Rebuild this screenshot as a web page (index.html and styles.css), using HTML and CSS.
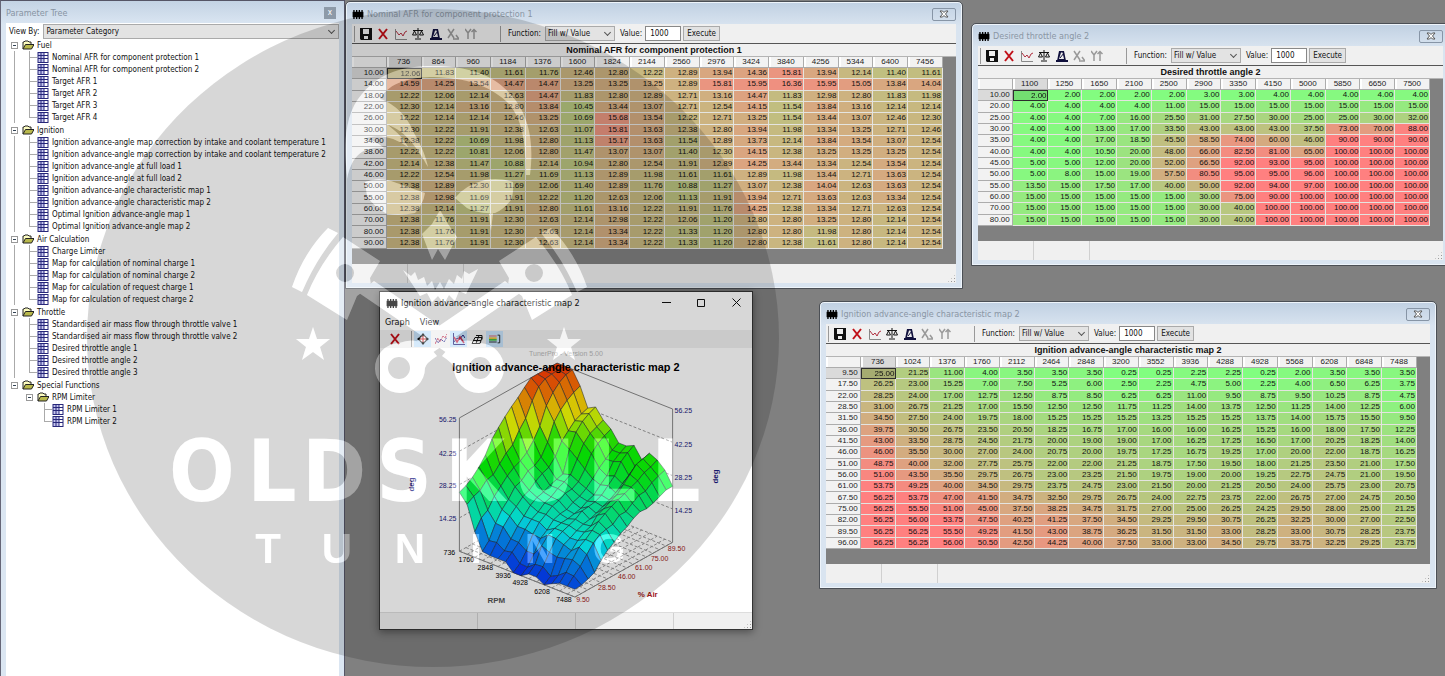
FILE: index.html
```
<!DOCTYPE html>
<html lang="en">
<head>
<meta charset="utf-8">
<title>Parameter Tree</title>
<link rel="stylesheet" href="styles.css">
</head>
<body>
<svg class="defs" aria-hidden="true">
  <symbol id="i-chip" viewBox="0 0 12 10"><path d="M0 2h12v6H0z"/><path d="M1.5 0v10M4.5 0v10M7.5 0v10M10.500 0v10" stroke="#000" stroke-width="1.500"/></symbol>
  <symbol id="i-map" viewBox="0 0 11 11"><path d="M0 0h11v11H0z" fill="#26267a"/><path d="M1 1h2v2H1zM4 1h2v2H4zM1 4h2v2H1zM4 4h2v2H4zM1 7h2v3H1zM4 7h2v3H4z" fill="#c4c4ee"/><path d="M7 1h3v2H7zM7 4h3v2H7zM7 7h3v3H7z" fill="#fff"/></symbol>
  <symbol id="i-folder" viewBox="0 0 12 10"><path d="M1 9V2h1l1-1h3l1 1h2v2" fill="#fbfbc0" stroke="#222"/><path d="M1 9l2.500-4.500H12L9.500 9z" fill="#b9b94c" stroke="#222"/></symbol>
  <symbol id="i-save" viewBox="0 0 12 12"><path d="M0 0h12v12H1l-1-1z" fill="#111"/><path d="M3 1h6v5H3zM4 8h4v3H4z" fill="#eee"/></symbol>
  <symbol id="i-x" viewBox="0 0 12 12"><path d="M2 1l8 10M10 1L2 11" stroke="#c01018" stroke-width="2" fill="none"/></symbol>
  <symbol id="i-graph" viewBox="0 0 12 12"><path d="M.5 1v10.500H12" stroke="#888" fill="none"/><path d="M1 3l3 4 2-2 2 3 2-4 2-1" stroke="#b03040" fill="none"/></symbol>
  <symbol id="i-scale" viewBox="0 0 12 12"><path d="M6 0v10M3 11h6M1 2.500h10M2.500 3L.5 7h4zM9.500 3l-2 4h4z" stroke="#111" fill="none"/></symbol>
  <symbol id="i-metro" viewBox="0 0 12 12"><path d="M1 11L3 1h5l2 10z" fill="#10103c"/><path d="M0 10h12v2H0z" fill="#10103c"/><path d="M5 2.500h1.500L8 9H3z" fill="#eee"/><path d="M4 8l4-5" stroke="#10103c"/></symbol>
  <symbol id="i-xa" viewBox="0 0 12 12"><path d="M1 1l6 9M7 1L1 10M6 11h6l-3-4" stroke="#999" stroke-width="1.500" fill="none"/></symbol>
  <symbol id="i-yt" viewBox="0 0 12 12"><path d="M0 1l3 4 3-4M3 5v6M9 11V2M6.500 4L9 1.500 11.500 4" stroke="#999" stroke-width="1.500" fill="none"/></symbol>
  <symbol id="i-close" viewBox="0 0 10 8"><path d="M1 1h2.500L5 2.500 6.500 1H9L6.500 4 9 7H6.500L5 5.500 3.500 7H1l2.500-3z" fill="#fff" stroke="#555"/></symbol>
  <symbol id="i-target" viewBox="0 0 12 12"><circle cx="6" cy="6" r="3.500" fill="#fff" stroke="#111"/><path d="M6 0l2 2.500H4zM6 12l2-2.500H4zM0 6l2.500-2v4zM12 6L9.500 4v4z"/><path d="M3 6h6M6 3v6" stroke="#c01018"/></symbol>
  <symbol id="i-waves" viewBox="0 0 12 12"><path d="M0 11l3-6 2 4 3-6 2 2 2-4" stroke="#c03050" fill="none" stroke-dasharray="3 1"/><path d="M0 5l3 5 3-4 3 3 3-5" stroke="#303090" fill="none" stroke-dasharray="2 1"/></symbol>
  <symbol id="i-plot" viewBox="0 0 12 12"><path d="M.5 0v11.500H12M1 9l3-4 2 2 4-5 2 3" stroke="#26267a" fill="none"/><path d="M1 4l3 5 3-5 4 6" stroke="#c03050" stroke-width="1.500" fill="none"/></symbol>
  <symbol id="i-mesh" viewBox="0 0 12 12"><path d="M1 10.500l3-6h7l-2 6zM2.500 7.500h7.500M5 10.500l3-8h3v4M5 2.500h4" stroke="#111" fill="none"/></symbol>
  <symbol id="i-legend" viewBox="0 0 14 12"><path d="M0 2.500h9" stroke="#e05050"/><path d="M0 4h9v2H0z" fill="#e8c040"/><path d="M0 6h9v2H0z" fill="#4b4"/><path d="M0 9.500h9M10 1.500h2.500v9H10" stroke="#111" fill="none"/></symbol>
</svg>

<div class="desktop">
  <aside class="pane">
    <header class="pane-head"><h1>Parameter Tree</h1><button type="button" aria-label="Close tree">x</button></header>
    <div class="pane-body">
      <div class="viewby">
        <label for="viewby">View By:</label>
        <span class="drop"><select id="viewby"><option>Parameter Category</option></select></span>
      </div>
      <ul class="tree" id="tree"></ul>
    </div>
  </aside>

  <main class="workspace">
    <section class="win win-afr" data-map="afr"></section>
    <section class="win win-throttle" data-map="throttle"></section>
    <section class="win win-ignition" data-map="ignition"></section>

    <section class="graph">
      <header class="graph-head">
        <svg class="chip"><use href="#i-chip"/></svg>
        <h2>Ignition advance-angle characteristic map 2</h2>
        <button type="button" aria-label="Minimize"><svg viewBox="0 0 9 9"><path d="M0 4.500h9"/></svg></button>
        <button type="button" aria-label="Maximize"><svg viewBox="0 0 9 9"><path d="M.5 1.500h7v7h-7z"/></svg></button>
        <button type="button" aria-label="Close"><svg viewBox="0 0 9 9"><path d="M.5.5l8 8M8.500.5l-8 8"/></svg></button>
      </header>
      <nav class="menu"><button type="button">Graph</button><button type="button">View</button></nav>
      <div class="graph-tools">
        <button type="button" aria-label="Delete"><svg><use href="#i-x"/></svg></button>
        <span class="sep"></span>
        <button type="button" class="on" aria-label="Move"><svg><use href="#i-target"/></svg></button>
        <button type="button" aria-label="Points"><svg><use href="#i-waves"/></svg></button>
        <button type="button" class="on" aria-label="Plot"><svg><use href="#i-plot"/></svg></button>
        <button type="button" aria-label="Mesh"><svg><use href="#i-mesh"/></svg></button>
        <button type="button" class="on" aria-label="Legend"><svg><use href="#i-legend"/></svg></button>
      </div>
      <svg class="chart" id="chart" viewBox="380 348 372 265"></svg>
      <footer class="status quarters"><span></span><span></span><span></span><span></span></footer>
    </section>
  </main>

  <svg class="mark" viewBox="87 9 692 658" aria-hidden="true">
    <mask id="cut" maskUnits="userSpaceOnUse" x="87" y="9" width="692" height="658">
      <path d="M87 9h692v658H87z" fill="#fff"/>
      <use href="#emblem" fill="#000"/>
    </mask>
    <ellipse cx="433" cy="338" rx="346" ry="329" fill="#000" fill-opacity=".155" mask="url(#cut)"/>
    <g fill="#fff" opacity=".28">
      <g id="emblem">
        <path d="M347 175C343 140 346 112 362 94 380 72 405 66 432 66c35 0 62 8 80 30 18 20 22 50 18 79h-4c0-30-3-58-20-74-18-16-40-23-72-24-22 0-45 5-54 22 14 4 28 18 34 34 8 14 12 24 14 34-10-18-22-36-40-42 10 8 16 14 20 22-14-10-30-14-44-8 8 0 14 4 20 9-20-2-32 6-37 31z"/>
        <path d="M365 182q12-5 26-1l34 12q-2 12-10 20-14 3-28 1-14-8-20-18zM455 198q10-13 30-18 14-3 28 2 1 10-2 18-8 10-16 13-18 1-28-5zM440 210l8 14 9 13-12 23-7-11-6 11-10-26 10-10zM489 214l4-1-2 18z"/>
        <path d="M403 270l8 6 4-4 3 8 6-3 3 9 5-5 3 9 5-8 4 7 5-10 5 5 3-9 5 4 2-8 5 3 9-5-12 25-7-3-4 10-6-6-5 9-6-8-6 6-5-9-7 3z"/>
        <g id="piston">
          <path fill-rule="evenodd" d="M328 228l10 5q-22 26-36 59l-10-5q12-35 36-59zM343 237l37 24-10 17 1 8-14 10-10 24-40-25q12-30 36-58zM354 273a9 9 0 1 0-18 0 9 9 0 1 0 18 0z"/>
          <path d="M374 281l88 60-12 14-91-62z"/>
          <path fill-rule="evenodd" d="M452 344a35 35 0 0 1 28-1 25 25 0 1 1-26 25q-1-5-12-12zM491 368a11 11 0 1 0-22 0 11 11 0 1 0 22 0z"/>
        </g>
        <use href="#piston" transform="matrix(-1 0 0 1 879 0)"/>
        <path id="star" d="M313 327l4 12h13l-10 8 4 13-11-8-11 8 4-13-10-8h13z"/>
        <use href="#star" x="251"/>
        <g class="mark-name">
          <text x="202" y="501">O</text><text x="272" y="501">L</text><text x="334" y="501">D</text><text x="404" y="501">S</text><text x="475" y="501">K</text><text x="544" y="501">U</text><text x="612" y="501">L</text><text x="676" y="501">L</text>
        </g>
        <g class="mark-sub">
          <text x="268" y="563">T</text><text x="337" y="563">U</text><text x="410" y="563">N</text><text x="476" y="563">I</text><text x="540" y="563">N</text><text x="609" y="563">G</text>
        </g>
      </g>
    </g>
  </svg>
</div>
<script src="app.js"></script>
</body>
</html>
```

FILE: styles.css
```
* { box-sizing: border-box; }
html, body { height: 100%; margin: 0; }
body { font-family: "DejaVu Sans Condensed", "DejaVu Sans", sans-serif; font-size: 8px; color: #111; background: #808080; }
button, input, select { font: inherit; color: inherit; }
button { margin: 0; padding: 0; border: 0; background: none; }
h1, h2, h3 { margin: 0; font-weight: normal; }
ul { list-style: none; margin: 0; padding: 0; }
.defs { position: absolute; width: 0; height: 0; }

.desktop { position: relative; display: flex; height: 100vh; overflow: hidden; }
.mark { position: absolute; left: 87px; top: 9px; width: 692px; height: 658px; pointer-events: none; }
.mark-name { font: bold 86px "DejaVu Sans Condensed", "DejaVu Sans", sans-serif; text-anchor: middle; }
.mark-sub { font: bold 42px "Liberation Sans", sans-serif; text-anchor: middle; }

/* parameter tree */
.pane { width: 345px; flex: none; display: flex; flex-direction: column; padding: 2px 5px 0 5px; background: linear-gradient(#c3d3e4, #dbe6f2 24px); border-left: 1px solid #667; border-right: 1px solid #556; border-top: 1px solid #556; }
.pane-head { height: 20px; display: flex; align-items: center; justify-content: space-between; padding-right: 3px; }
.pane-head h1 { font-size: 9px; color: #8794a3; }
.pane-head button { width: 12px; height: 12px; background: #8d9aa8; color: #fff; line-height: 10px; }
.pane-body { flex: 1; background: #fff; }
.viewby { display: flex; align-items: center; height: 16px; padding-left: 3px; gap: 4px; }
.viewby .drop { flex: 1; }
.drop { position: relative; display: flex; }
.drop::after { content: ""; position: absolute; right: 5px; top: 4px; width: 4px; height: 4px; border: solid #555; border-width: 0 1px 1px 0; transform: rotate(45deg); }
select { appearance: none; width: 100%; height: 15px; margin: 0; padding: 0 2px; background: #e3e3e3; border: 1px solid #aaa; border-radius: 0; }
.tree { padding-left: 1px; }
.tree li { display: flex; align-items: center; height: 12px; white-space: nowrap; }
.tree li.root:not(:first-child) { margin-top: 1px; }
.tree .g { width: 15px; height: 12px; flex: none; }
.g.line { background: linear-gradient(#aaa, #aaa) 7px 0 / 1px 100% no-repeat; }
.g.tee { background: linear-gradient(#aaa, #aaa) 7px 0 / 1px 100% no-repeat, linear-gradient(#aaa, #aaa) 7px 6px / 8px 1px no-repeat; }
.g.end { background: linear-gradient(#aaa, #aaa) 7px 0 / 1px 6px no-repeat, linear-gradient(#aaa, #aaa) 7px 6px / 8px 1px no-repeat; }
.g.box { display: flex; align-items: center; justify-content: center; }
.g.box button { width: 7px; height: 7px; border: 1px solid #999; background: linear-gradient(#345, #345) 1px 2px / 3px 1px no-repeat #fff; }
.tree svg { width: 12px; height: 11px; flex: none; margin-right: 3px; }
.tree .folder { height: 10px; }

/* map windows */
.workspace { position: relative; flex: 1; overflow: hidden; background: #808080; }
.win { position: absolute; display: flex; flex-direction: column; padding: 0 6px 5px; background: linear-gradient(#c0d0e2, #d9e4f0 24px); border: 1px solid #4b4f55; border-radius: 5px 5px 0 0; box-shadow: inset 0 0 0 1px #eef4fa; }
.win-afr { left: 0; top: 1px; width: 618px; }
.win-throttle { left: 626px; top: 23px; width: 479px; }
.win-ignition { left: 474px; top: 301px; width: 618px; }
.win-head { height: 22px; padding-top: 2px; display: flex; align-items: center; gap: 3px; }
.win-head h2 { flex: 1; font-size: 9px; color: #8a96a4; }
.chip { width: 12px; height: 9px; flex: none; }
.win-head button { width: 24px; height: 13px; border: 1px solid #8795a6; border-radius: 2px; display: flex; align-items: center; justify-content: center; }
.win-head button svg { width: 10px; height: 8px; }
.tools { height: 19px; display: flex; align-items: center; background: #f0f0f0; padding-left: 2px; }
.sep { width: 1px; height: 16px; background: #999; flex: none; }
.icons { display: flex; justify-content: space-between; width: 120px; margin: 0 22px 0 3px; }
.icons button { width: 15px; height: 12px; display: flex; justify-content: center; }
.icons svg { width: 12px; height: 12px; }
.tools label { padding: 0 4px 0 7px; }
.tools label ~ label { padding: 0 3px 0 5px; }
.tools .drop { width: 70px; }
.tools input { width: 36px; height: 15px; margin: 0; padding: 0 4px; border: 1px solid #888; background: #fff; }
.tools .exec { height: 15px; width: 37px; margin-left: 2px; background: #e2e2e2; border: 1px solid #aaa; }
.sheet { background: #808080; border-top: 1px solid #555; padding-bottom: 15px; }
.sheet h3 { height: 13px; line-height: 13px; text-align: center; background: #f0f0f0; border-bottom: 1px solid #b4b4b4; font: bold 9px/13px "Liberation Sans", sans-serif; overflow: hidden; }
.sheet table { width: calc(100% - 13px); table-layout: fixed; border-collapse: separate; border-spacing: 0; background: #e4e4e4; font-family: "Liberation Sans", sans-serif; }
.sheet .rows-16 { height: 192px; }
.sheet .rows-12 { height: 147px; }
.sheet th, .sheet td { padding: 0 1px 0 0; height: 11px; line-height: 8px; text-align: right; border: solid #e4e4e0; border-width: 0 1px 1px 0; font-weight: normal; }
.sheet th { background: #f2f2f2; border-color: #acacac; padding-right: 2px; color: #222; }
.sheet thead th { text-align: center; padding: 0; box-shadow: inset 2px 0 0 #fff; }
.sheet .cur { background: #dadada; }
.sheet td.sel { border: 1px solid #333; padding-right: 0; filter: brightness(.88); }
.status { height: 19px; display: flex; background: #f0f0f0; }
.status span { border-right: 1px solid #d0d0d0; flex: none; width: 56px; }
.status span:last-child { flex: 1; border: 0; display: flex; justify-content: flex-end; align-items: flex-end; }
.status span:last-child::after { content: ""; width: 9px; height: 9px; background: linear-gradient(#aaa, #aaa) 0 0 / 2px 2px no-repeat, radial-gradient(circle, #999 1px, transparent 1px) 0 0 / 3px 3px; clip-path: polygon(100% 0, 100% 100%, 0 100%); }

/* 3D graph window */
.graph { position: absolute; left: 34px; top: 291px; width: 374px; height: 339px; display: flex; flex-direction: column; background: #fff; border: 1px solid #333; box-shadow: 0 2px 8px rgba(0, 0, 0, .4); }
.graph-head { height: 22px; display: flex; align-items: center; padding-left: 6px; gap: 3px; }
.graph-head h2 { flex: 1; font-size: 9px; }
.graph-head button { width: 32px; height: 18px; }
.graph-head button svg { width: 9px; height: 9px; fill: none; stroke: #111; }
.menu { height: 16px; display: flex; align-items: center; gap: 10px; padding-left: 5px; font-size: 9px; }
.graph-tools { height: 18px; display: flex; align-items: center; gap: 1px; padding-left: 6px; background: #f0f0f0; }
.graph-tools button { width: 17px; height: 16px; display: flex; align-items: center; justify-content: center; }
.graph-tools .sep { margin: 0 1px 0 7px; }
.graph-tools svg { width: 12px; height: 12px; }
.graph-tools .on { background: #c6e2fa; }
.chart { flex: 1; min-height: 0; width: 100%; font: 7px "Liberation Sans", sans-serif; }
.chart-title { font-size: 11px; font-weight: bold; text-anchor: middle; }
.chart .version { fill: #bbb; text-anchor: middle; }
.chart .deg { fill: #1a1a80; }
.chart .axis { font-size: 8px; font-weight: bold; text-anchor: middle; }
.chart .rpm { fill: #555; }
.chart .air { fill: #a01818; }
.chart .end-anchor { text-anchor: end; }
.chart .mid { text-anchor: middle; }
.frame { fill: none; stroke: #888; stroke-width: 1; }
.dash { fill: none; stroke: #999; stroke-dasharray: 3 2; }
.surface path { stroke: #1c2430; stroke-width: 1; stroke-opacity: .5; stroke-linejoin: round; }
.graph .status { height: 17px; border-top: 1px solid #ddd; }
.graph .quarters span { width: 98px; }
```

FILE: app.js
```
const maps = {
  afr: {
    title: "Nominal AFR for component protection 1", tone: v => .43 + .075 * (v - 10.45),
    cols: "736 864 960 1184 1376 1600 1824 2144 2560 2976 3424 3840 4256 5344 6400 7456",
    rows: `10.00 12.06 11.83 11.40 11.61 11.76 12.46 12.80 12.22 12.89 13.94 14.36 15.81 13.94 12.14 11.40 11.61
14.00 14.59 14.25 13.54 14.47 14.47 13.25 13.25 13.25 12.89 15.81 15.95 16.36 15.95 15.05 13.84 14.04
18.00 12.22 12.06 12.14 12.63 14.47 11.83 12.80 12.89 12.71 13.16 14.47 11.83 12.98 12.80 11.83 11.98
22.00 12.30 12.14 13.16 12.80 13.84 10.45 13.44 13.07 12.71 12.54 14.15 11.54 13.84 13.16 12.14 12.14
26.00 12.22 12.14 12.14 12.46 13.25 10.69 15.68 13.54 12.22 12.71 13.25 11.54 13.44 13.07 12.46 12.30
30.00 12.30 12.22 11.91 12.38 12.63 11.07 15.81 13.63 12.38 12.80 13.94 11.98 13.34 13.25 12.71 12.46
34.00 12.38 12.22 10.69 11.98 12.80 11.13 15.17 13.63 11.54 12.89 13.73 12.14 13.84 13.54 13.07 12.54
38.00 12.22 12.22 10.81 12.06 12.80 11.47 13.07 13.07 11.40 12.30 14.15 12.38 13.25 13.25 13.25 12.54
42.00 12.14 12.38 11.47 10.88 12.14 10.94 12.80 12.54 11.91 12.89 14.25 13.44 13.34 12.54 13.54 12.54
46.00 12.22 12.54 11.98 11.27 11.69 11.13 12.89 11.98 11.61 11.61 12.89 11.98 13.44 12.71 13.63 12.54
50.00 12.38 12.89 12.30 11.69 12.06 11.40 12.89 11.76 10.88 11.27 13.07 12.38 14.04 12.63 13.63 12.54
55.00 12.38 12.98 11.69 11.91 12.22 11.20 12.63 12.06 11.13 11.91 13.94 12.71 13.63 12.63 13.34 12.54
60.00 12.38 12.14 11.27 11.91 12.80 11.61 13.16 12.22 11.91 11.76 14.25 12.38 13.34 12.71 12.63 12.54
70.00 12.38 11.76 11.91 12.30 12.63 12.14 12.98 12.22 12.06 11.20 12.80 12.80 13.25 12.80 12.14 12.54
80.00 12.38 11.76 11.91 12.30 12.63 12.14 13.34 12.22 11.33 11.20 12.80 12.80 11.98 12.80 12.14 12.54
90.00 12.38 11.76 11.91 12.30 12.63 12.14 13.34 12.22 11.33 11.20 12.80 12.38 11.61 12.80 12.14 12.54`
  },
  throttle: {
    title: "Desired throttle angle 2", tone: v => v / 90,
    cols: "1100 1250 1650 2100 2500 2900 3350 4150 5000 5850 6650 7500",
    rows: `10.00 2.00 2.00 2.00 2.00 2.00 3.00 3.00 4.00 4.00 4.00 4.00 4.00
20.00 4.00 4.00 4.00 4.00 11.00 15.00 15.00 15.00 15.00 15.00 15.00 15.00
25.00 4.00 4.00 7.00 16.00 25.50 31.00 27.50 30.00 25.00 25.00 30.00 32.00
30.00 4.00 4.00 13.00 17.00 33.50 43.00 43.00 43.00 37.50 73.00 70.00 88.00
35.00 4.00 4.00 17.00 18.50 45.50 58.50 74.00 60.00 46.00 90.00 90.00 90.00
40.00 4.00 4.00 10.50 20.00 48.00 66.00 82.50 81.00 65.00 100.00 100.00 100.00
45.00 5.00 5.00 12.00 20.00 52.00 66.50 92.00 93.00 95.00 100.00 100.00 100.00
50.00 5.00 8.00 15.00 19.00 57.50 80.50 95.00 95.00 96.00 100.00 100.00 100.00
55.00 13.50 15.00 17.50 17.00 40.00 50.00 92.00 94.00 97.00 100.00 100.00 100.00
60.00 15.00 15.00 15.00 15.00 15.00 30.00 75.00 90.00 100.00 100.00 100.00 100.00
70.00 15.00 15.00 15.00 15.00 15.00 30.00 40.00 100.00 100.00 100.00 100.00 100.00
80.00 15.00 15.00 15.00 15.00 15.00 30.00 40.00 100.00 100.00 100.00 100.00 100.00`
  },
  ignition: {
    title: "Ignition advance-angle characteristic map 2", tone: v => v / 54,
    cols: "736 1024 1376 1760 2112 2464 2848 3200 3552 3936 4288 4928 5568 6208 6848 7488",
    rows: `9.50 25.00 21.25 11.00 4.00 3.50 3.50 3.50 0.25 0.25 2.25 2.25 0.25 2.00 3.50 3.50 3.50
17.50 26.25 23.00 15.25 7.00 7.50 5.25 6.00 2.50 2.25 4.75 5.00 2.25 4.00 6.50 6.25 3.75
22.00 28.25 24.00 17.00 12.75 12.50 8.75 8.50 6.25 6.25 11.00 9.50 8.75 9.50 10.25 8.75 4.75
28.50 31.00 26.75 21.25 17.00 15.50 12.50 12.50 11.75 11.25 14.00 13.75 12.50 11.25 14.00 12.25 6.00
31.50 34.50 27.50 24.00 19.75 18.00 15.25 15.25 15.25 13.25 15.25 15.25 13.75 14.00 15.75 15.50 9.50
36.00 39.75 30.50 26.75 23.50 20.50 18.25 16.75 17.00 16.00 16.00 16.25 15.25 16.00 18.00 17.50 12.25
41.50 43.00 33.50 28.75 24.50 21.75 20.00 19.00 19.00 17.00 16.25 17.25 16.50 17.00 20.25 18.25 14.00
46.00 46.00 35.50 30.00 27.00 24.00 20.75 20.00 19.75 17.25 16.75 19.25 17.00 20.00 22.00 18.75 16.25
51.00 48.75 40.00 32.00 27.75 25.75 22.00 22.00 21.25 18.75 17.50 19.50 18.00 21.25 23.50 21.00 17.50
56.00 51.00 43.50 35.50 29.75 26.75 23.00 23.25 21.50 19.75 19.00 20.00 19.25 22.75 24.75 21.00 19.50
61.00 53.75 49.25 40.00 34.50 29.75 23.75 24.75 23.00 21.50 20.00 21.25 20.50 24.00 25.75 23.00 20.75
67.50 56.25 53.75 47.00 41.50 34.75 32.50 29.75 26.75 24.00 22.75 23.75 22.00 26.75 27.00 24.75 20.50
75.00 56.25 55.50 51.00 45.00 37.50 38.25 34.75 31.75 27.00 25.00 26.25 24.25 29.50 28.00 25.00 21.25
82.00 56.25 56.00 53.75 47.50 40.25 41.25 37.50 34.50 29.25 29.50 30.75 26.25 32.25 30.00 27.00 22.50
89.50 56.25 56.25 55.50 49.25 41.50 43.00 38.75 36.25 31.50 31.50 33.00 28.25 33.00 30.75 28.25 23.75
96.00 56.25 56.25 56.00 50.50 42.50 44.25 40.00 37.50 33.00 33.00 34.50 29.75 33.75 32.25 29.25 23.75`
  }
};

/* parameter tree: group name and its maps */
const groups = [
  ["Fuel", ["Nominal AFR for component protection 1", "Nominal AFR for component protection 2", "Target AFR 1", "Target AFR 2", "Target AFR 3", "Target AFR 4"]],
  ["Ignition", ["Ignition advance-angle map correction by intake and coolant temperature 1", "Ignition advance-angle map correction by intake and coolant temperature 2", "Ignition advance-angle at full load 1", "Ignition advance-angle at full load 2", "Ignition advance-angle characteristic map 1", "Ignition advance-angle characteristic map 2", "Optimal Ignition advance-angle map 1", "Optimal Ignition advance-angle map 2"]],
  ["Air Calculation", ["Charge Limiter", "Map for calculation of nominal charge 1", "Map for calculation of nominal charge 2", "Map for calculation of request charge 1", "Map for calculation of request charge 2"]],
  ["Throttle", ["Standardised air mass flow through throttle valve 1", "Standardised air mass flow through throttle valve 2", "Desired throttle angle 1", "Desired throttle angle 2", "Desired throttle angle 3"]],
  ["Special Functions", []]
];
const g = kind => `<span class="g ${kind}"></span>`;
const box = label => `<span class="g box"><button type="button" aria-label="Collapse ${label}"></button></span>`;
const folder = '<svg class="folder"><use href="#i-folder"/></svg>';
const mapIcon = '<svg><use href="#i-map"/></svg>';
let tree = "";
for (const [name, items] of groups) {
  tree += `<li class="root">${box(name)}${folder}${name}</li>`;
  items.forEach((t, i) => {
    tree += `<li>${g("line")}${g(i === items.length - 1 ? "end" : "tee")}${mapIcon}${t}</li>`;
  });
}
tree += `<li>${g("")}${box("RPM Limiter")}${folder}RPM Limiter</li>`;
tree += `<li>${g("")}${g("")}${g("tee")}${mapIcon}RPM Limiter 1</li>`;
tree += `<li>${g("")}${g("")}${g("end")}${mapIcon}RPM Limiter 2</li>`;
document.getElementById("tree").innerHTML = tree;

/* table windows */
const icons = [["save", "Save"], ["x", "Delete"], ["graph", "Graph"], ["scale", "Compare"], ["metro", "Tune"], ["xa", "X axis"], ["yt", "Y axis"]];
function cellColor(t) {
  t = Math.max(0, Math.min(1, t));
  return `rgb(${Math.round(128 + 127 * t)},${Math.round(255 - 127 * t)},128)`;
}
document.querySelectorAll("[data-map]").forEach(win => {
  const id = win.dataset.map, m = maps[id];
  const rows = m.rows.split("\n").map(r => r.trim().split(" "));
  const head = m.cols.split(" ").map((c, i) => `<th scope="col"${i ? "" : ' class="cur"'}>${c}</th>`).join("");
  const body = rows.map((r, y) => "<tr>" + r.map((v, x) => x
    ? `<td${x === 1 && y === 0 ? ' class="sel"' : ""} style="background-color:${cellColor(m.tone(+v))}">${v}</td>`
    : `<th scope="row"${y ? "" : ' class="cur"'}>${v}</th>`).join("") + "</tr>").join("");
  win.innerHTML = `
    <header class="win-head"><svg class="chip"><use href="#i-chip"/></svg><h2>${m.title}</h2>
      <button type="button" aria-label="Close"><svg><use href="#i-close"/></svg></button></header>
    <div class="tools"><span class="sep"></span>
      <div class="icons">${icons.map(([i, l]) => `<button type="button" aria-label="${l}"><svg><use href="#i-${i}"/></svg></button>`).join("")}</div>
      <span class="sep"></span>
      <label for="${id}-fn">Function:</label><span class="drop"><select id="${id}-fn"><option>Fill w/ Value</option></select></span>
      <label for="${id}-val">Value:</label><input id="${id}-val" value="1000">
      <button type="button" class="exec">Execute</button></div>
    <div class="sheet"><h3>${m.title}</h3>
      <table class="rows-${rows.length}"><thead><tr><th></th>${head}</tr></thead><tbody>${body}</tbody></table></div>
    <footer class="status"><span></span><span></span><span></span></footer>`;
});

/* 3D surface: rpm runs left to front, air runs front to right, height is the angle */
const z = maps.ignition.rows.split("\n").map(r => r.trim().split(" ").slice(1).map(Number));
const n = 15;
function pt(i, j, v) {
  return [459 + 116 * i / n + 98 * j / n, 552 + 46 * i / n - 55 * j / n - (v - 0.25) * 2.39].map(k => k.toFixed(1));
}
const line = (pts, cls, close) => `<path class="${cls}" d="M${pts.map(p => p.join(" ")).join("L")}${close ? "z" : ""}"/>`;
const stops = [[0, 232], [.2, 200], [.28, 172], [.5, 125], [.62, 110], [.75, 65], [.88, 35], [1, 14]];
function hue(t) {
  for (let k = 1; k < stops.length; k++) {
    const [a, ha] = stops[k - 1], [b, hb] = stops[k];
    if (t <= b) return ha + (hb - ha) * (t - a) / (b - a);
  }
  return 14;
}
let out = "";
for (let k = 0; k <= n; k++) {
  out += line([pt(k, 0, .25), pt(k, n, .25)], "dash") + line([pt(0, k, .25), pt(n, k, .25)], "dash");
}
for (const v of [14.25, 28.25, 42.25]) out += line([pt(0, 0, v), pt(0, n, v), pt(n, n, v)], "dash");
out += line([pt(0, 0, .25), pt(0, 0, 56.25), pt(0, n, 56.25), pt(n, n, 56.25), pt(n, n, .25), pt(n, 0, .25)], "frame", true);
let quads = "";
for (let i = 0; i < n; i++) for (let j = n - 1; j >= 0; j--) {
  const avg = (z[j][i] + z[j][i + 1] + z[j + 1][i] + z[j + 1][i + 1]) / 4;
  const q = line([pt(i, j, z[j][i]), pt(i + 1, j, z[j][i + 1]), pt(i + 1, j + 1, z[j + 1][i + 1]), pt(i, j + 1, z[j + 1][i])], "", true);
  quads += q.replace("<path", `<path fill="hsl(${hue(avg / 56.25).toFixed(0)} 100% 51%)"`);
}
const label = (x, y, cls, t) => `<text x="${x}" y="${y}" class="${cls}">${t}</text>`;
out += label(566, 356, "version", "TunerPro - Version 5.00");
out += `<g class="surface">${quads}</g>`;
out += label(566, 371, "chart-title", "Ignition advance-angle characteristic map 2");
[["56.25", 422, 413], ["42.25", 456, 447], ["28.25", 489, 481], ["14.25", 522, 514]].forEach(([t, l, r]) => {
  out += label(456, l, "deg end-anchor", t) + label(675, r, "deg", t);
});
[["736", 449, 556], ["1760", 466, 563], ["2848", 485, 571], ["3936", 503, 579], ["4928", 520, 586], ["6208", 542, 595], ["7488", 564, 603]].forEach(([t, x, y]) => { out += label(x, y, "mid", t); });
[["9.50", 583, 603], ["28.50", 607, 591], ["46.00", 627, 580], ["61.00", 644, 571], ["75.00", 660, 562], ["89.50", 677, 552]].forEach(([t, x, y]) => { out += label(x, y, "mid air", t); });
out += label(496, 604, "axis rpm", "RPM") + label(648, 598, "axis air", "% Air");
out += '<text class="axis deg" transform="translate(413 485) rotate(-90)">deg</text><text class="axis deg" transform="translate(719 477) rotate(-90)">deg</text>';
document.getElementById("chart").innerHTML = out;
```
